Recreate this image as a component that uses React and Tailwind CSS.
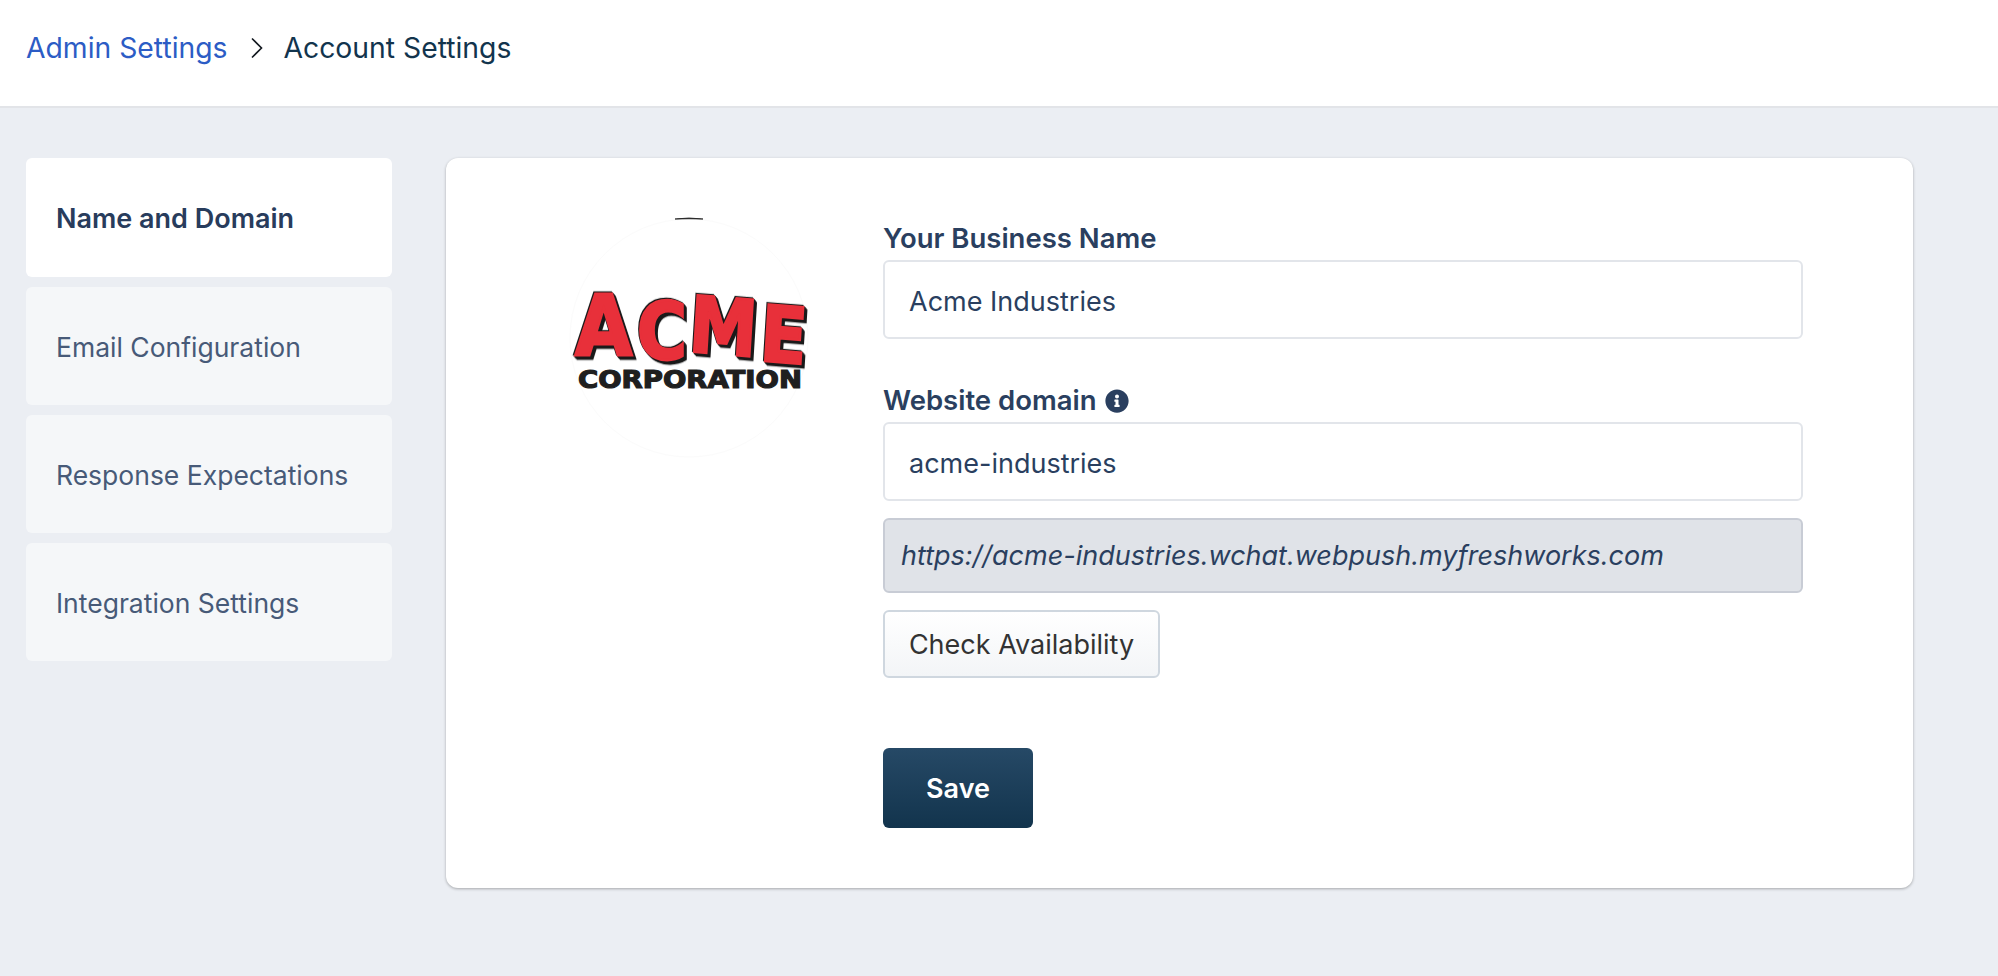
import { FaInfoCircle } from "react-icons/fa";

const tabs = ["Email Configuration", "Response Expectations", "Integration Settings"];

function AcmeLogo() {
  const letter = "[font-family:'DejaVu_Sans',sans-serif] font-bold";
  return (
    <svg width="240" height="240" viewBox="0 0 240 240" className="shrink-0 overflow-visible">
      <circle cx="120" cy="120" r="119" fill="#fff" stroke="#fbfbfb" />
      <path d="M106 1 Q120 -1 134 1 Q120 0.5 106 1 Z" stroke="#222" strokeWidth="0.8" fill="#222" />
      {/* one text so the word stays whole, each glyph placed on its own */}
      <text
        transform="scale(1 1.14)"
        fontSize="68"
        fill="#e8303a"
        stroke="#e8303a"
        strokeWidth="2.5"
        className={`${letter} [filter:drop-shadow(1px_1px_0_#1a1a1a)_drop-shadow(-1px_-1px_0_#1a1a1a)_drop-shadow(2px_2px_0_#1a1a1a)]`}
      >
        <tspan x="6" y="120" fontSize="74">A</tspan>
        <tspan x="68 119 190" y="124 117 125" rotate="0 4 4">CME</tspan>
      </text>
      <text x="9" y="170" fontSize="24" textLength="224" lengthAdjust="spacingAndGlyphs" fill="#1f1f1f" stroke="#1f1f1f" strokeWidth="1.2" className={letter}>CORPORATION</text>
    </svg>
  );
}

export default function App() {
  return (
    <div className="min-h-screen bg-[#ebeef3] font-['Inter',sans-serif]">
      {/* Breadcrumb */}
      <div className="flex items-center h-[108px] pb-[10px] bg-white border-b-2 border-[#e2e4e8] pl-[26px] text-[28.3px]">
        <a className="text-[#2c5cc5]">Admin Settings</a>
        <svg className="ml-[22px] mr-[21px] w-[13px] h-[22px]" viewBox="0 0 13 22" fill="none" stroke="#12181f" strokeWidth="1.6">
          <path d="M2 1.5 L11.5 11 L2 20.5" />
        </svg>
        <span className="text-[#12344d]">Account Settings</span>
      </div>

      <div className="flex items-start pt-[50px] pl-[26px]">
        {/* Side tabs */}
        <div className="flex flex-col gap-[10px] w-[366px] shrink-0 text-[26.5px]">
          <div className="flex items-center h-[119px] pl-[30px] pt-[3px] bg-white rounded-md text-[27px] font-semibold text-[#283c5c]">Name and Domain</div>
          {tabs.map((t) => (
            <div key={t} className="flex items-center h-[118px] pl-[30px] pt-[3px] bg-[#f5f7f9] rounded-md text-[#475a78]">{t}</div>
          ))}
        </div>

        {/* Card */}
        <div className="flex items-start w-[1467px] ml-[54px] pt-[60px] pb-[60px] bg-white rounded-xl shadow-[0_1px_3px_rgba(0,0,0,0.3)]">
          <div className="ml-[123px] w-[314px] shrink-0">
            <AcmeLogo />
          </div>
          <div className="w-[920px] pt-[4px] text-[27px] text-[#2a3f5f]">
            <label className="flex items-center h-8 pt-[2px] mb-[6px] text-[27.5px] font-semibold">Your Business Name</label>
            <div className="flex items-center h-[79px] px-[24px] pt-[5px] bg-white border-2 border-[#e2e5ea] rounded-md">Acme Industries</div>

            <label className="flex items-center gap-2 h-8 pt-[2px] mt-[45px] mb-[6px] text-[27.5px] font-semibold">
              Website domain
              <FaInfoCircle className="w-6 h-6" />
            </label>
            <div className="flex items-center h-[79px] px-[24px] pt-[5px] bg-white border-2 border-[#e2e5ea] rounded-md">acme-industries</div>

            <div className="flex items-center h-[75px] mt-[17px] px-4 pt-[2px] bg-[#e0e3e8] border-2 border-[#c8ccd5] rounded-md italic">https://acme-industries.wchat.webpush.myfreshworks.com</div>

            <button className="block w-[277px] h-[68px] mt-[17px] pt-[2px] bg-gradient-to-b from-white to-[#f3f5f7] border-2 border-[#cfd7df] rounded-md text-[#333]">Check Availability</button>

            <button className="block w-[150px] h-[80px] mt-[70px] pt-[2px] bg-gradient-to-b from-[#264966] to-[#12344d] rounded-md text-white font-semibold">Save</button>
          </div>
        </div>
      </div>
    </div>
  );
}
